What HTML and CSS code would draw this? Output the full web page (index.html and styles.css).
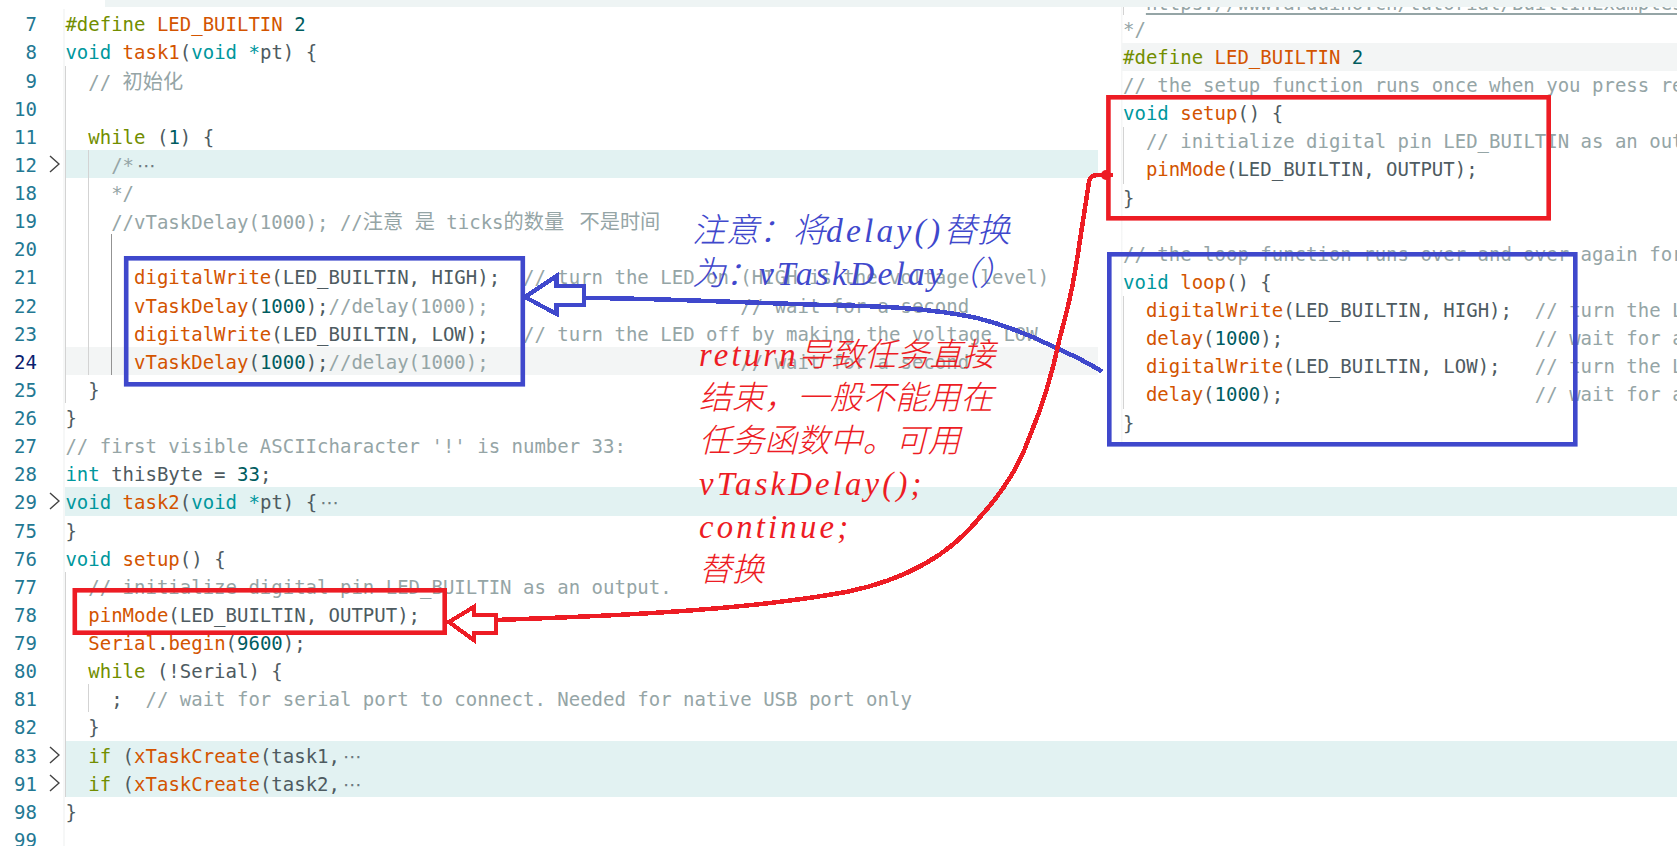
FILE: index.html
```html
<!DOCTYPE html>
<html lang="zh">
<head>
<meta charset="utf-8">
<title>FreeRTOS blink</title>
<link rel="stylesheet" href="styles.css">
</head>
<body>
<main class="page">
  <div class="strip"></div>
  <section class="editor">
    <div class="row"><span class="num">7</span><span class="fold"></span><div class="code"><b class="k">#define</b> <b class="f">LED_BUILTIN</b> <b class="n">2</b></div></div>
    <div class="row"><span class="num">8</span><span class="fold"></span><div class="code"><b class="t">void</b> <b class="f">task1</b>(<b class="t">void</b> <b class="t">*</b>pt) {</div></div>
    <div class="row"><span class="num">9</span><span class="fold"></span><div class="code"><i class="guide g1"></i>  <b class="c">// <span class="cjk">初始化</span></b></div></div>
    <div class="row"><span class="num">10</span><span class="fold"></span><div class="code"><i class="guide g1"></i></div></div>
    <div class="row"><span class="num">11</span><span class="fold"></span><div class="code"><i class="guide g1"></i>  <b class="k">while</b> (<b class="n">1</b>) {</div></div>
    <div class="row"><span class="num">12</span><span class="fold"><svg class="chev" viewBox="0 0 11 18"><path d="M1 1L10 9L1 17"/></svg></span><div class="code folded"><i class="guide g1"></i><i class="guide g2"></i>    <b class="c">/*</b><span class="more">⋯</span></div></div>
    <div class="row"><span class="num">18</span><span class="fold"></span><div class="code"><i class="guide g1"></i><i class="guide g2"></i>    <b class="c">*/</b></div></div>
    <div class="row"><span class="num">19</span><span class="fold"></span><div class="code"><i class="guide g1"></i><i class="guide g2"></i>    <b class="c">//vTaskDelay(1000); //<span class="cjk">注意</span> <span class="cjk">是</span> ticks<span class="cjk">的数量</span> <span class="cjk gap">不是时间</span></b></div></div>
    <div class="row"><span class="num">20</span><span class="fold"></span><div class="code"><i class="guide g1"></i><i class="guide g2"></i><i class="guide g3"></i></div></div>
    <div class="row"><span class="num">21</span><span class="fold"></span><div class="code"><i class="guide g1"></i><i class="guide g2"></i><i class="guide g3"></i>      <b class="f">digitalWrite</b>(LED_BUILTIN, HIGH);  <b class="c">// turn the LED on (HIGH is the voltage level)</b></div></div>
    <div class="row"><span class="num">22</span><span class="fold"></span><div class="code"><i class="guide g1"></i><i class="guide g2"></i><i class="guide g3"></i>      <b class="f">vTaskDelay</b>(<b class="n">1000</b>);<b class="c">//delay(1000);                      // wait for a second</b></div></div>
    <div class="row"><span class="num">23</span><span class="fold"></span><div class="code"><i class="guide g1"></i><i class="guide g2"></i><i class="guide g3"></i>      <b class="f">digitalWrite</b>(LED_BUILTIN, LOW);   <b class="c">// turn the LED off by making the voltage LOW</b></div></div>
    <div class="row active"><span class="num">24</span><span class="fold"></span><div class="code"><i class="guide g1"></i><i class="guide g2"></i><i class="guide g3"></i>      <b class="f">vTaskDelay</b>(<b class="n">1000</b>);<b class="c">//delay(1000);                      // wait for a second</b></div></div>
    <div class="row"><span class="num">25</span><span class="fold"></span><div class="code"><i class="guide g1"></i>  }</div></div>
    <div class="row"><span class="num">26</span><span class="fold"></span><div class="code">}</div></div>
    <div class="row"><span class="num">27</span><span class="fold"></span><div class="code"><b class="c">// first visible ASCIIcharacter '!' is number 33:</b></div></div>
    <div class="row"><span class="num">28</span><span class="fold"></span><div class="code"><b class="t">int</b> thisByte = <b class="n">33</b>;</div></div>
    <div class="row"><span class="num">29</span><span class="fold"><svg class="chev" viewBox="0 0 11 18"><path d="M1 1L10 9L1 17"/></svg></span><div class="code folded"><b class="t">void</b> <b class="f">task2</b>(<b class="t">void</b> <b class="t">*</b>pt) {<span class="more">⋯</span></div></div>
    <div class="row"><span class="num">75</span><span class="fold"></span><div class="code">}</div></div>
    <div class="row"><span class="num">76</span><span class="fold"></span><div class="code"><b class="t">void</b> <b class="f">setup</b>() {</div></div>
    <div class="row"><span class="num">77</span><span class="fold"></span><div class="code"><i class="guide g1"></i>  <b class="c">// initialize digital pin LED_BUILTIN as an output.</b></div></div>
    <div class="row"><span class="num">78</span><span class="fold"></span><div class="code"><i class="guide g1"></i>  <b class="f">pinMode</b>(LED_BUILTIN, OUTPUT);</div></div>
    <div class="row"><span class="num">79</span><span class="fold"></span><div class="code"><i class="guide g1"></i>  <b class="f">Serial</b>.<b class="f">begin</b>(<b class="n">9600</b>);</div></div>
    <div class="row"><span class="num">80</span><span class="fold"></span><div class="code"><i class="guide g1"></i>  <b class="k">while</b> (!Serial) {</div></div>
    <div class="row"><span class="num">81</span><span class="fold"></span><div class="code"><i class="guide g1"></i><i class="guide g2"></i>    ;  <b class="c">// wait for serial port to connect. Needed for native USB port only</b></div></div>
    <div class="row"><span class="num">82</span><span class="fold"></span><div class="code"><i class="guide g1"></i>  }</div></div>
    <div class="row"><span class="num">83</span><span class="fold"><svg class="chev" viewBox="0 0 11 18"><path d="M1 1L10 9L1 17"/></svg></span><div class="code folded"><i class="guide g1"></i>  <b class="k">if</b> (<b class="f">xTaskCreate</b>(task1,<span class="more">⋯</span></div></div>
    <div class="row"><span class="num">91</span><span class="fold"><svg class="chev" viewBox="0 0 11 18"><path d="M1 1L10 9L1 17"/></svg></span><div class="code folded"><i class="guide g1"></i>  <b class="k">if</b> (<b class="f">xTaskCreate</b>(task2,<span class="more">⋯</span></div></div>
    <div class="row"><span class="num">98</span><span class="fold"></span><div class="code">}</div></div>
    <div class="row"><span class="num">99</span><span class="fold"></span><div class="code"></div></div>
  </section>

  <section class="paste">
    <div class="pline"><i class="guide g1"></i>  <b class="c url">https://www.arduino.cn/tutorial/BuiltInExamples/Basics/Blink_LED_BUILTIN.html</b></div>
    <div class="pline"><b class="c">*/</b></div>
    <div class="pline current"><b class="k">#define</b> <b class="f">LED_BUILTIN</b> <b class="n">2</b></div>
    <div class="pline"><b class="c">// the setup function runs once when you press reset or power the board</b></div>
    <div class="pline"><b class="t">void</b> <b class="f">setup</b>() {</div>
    <div class="pline"><i class="guide g1"></i>  <b class="c">// initialize digital pin LED_BUILTIN as an output.</b></div>
    <div class="pline"><i class="guide g1"></i>  <b class="f">pinMode</b>(LED_BUILTIN, OUTPUT);</div>
    <div class="pline">}</div>
    <div class="pline"></div>
    <div class="pline"><b class="c">// the loop function runs over and over again forever</b></div>
    <div class="pline"><b class="t">void</b> <b class="f">loop</b>() {</div>
    <div class="pline"><i class="guide g1"></i>  <b class="f">digitalWrite</b>(LED_BUILTIN, HIGH);  <b class="c">// turn the LED on (HIGH is the voltage level)</b></div>
    <div class="pline"><i class="guide g1"></i>  <b class="f">delay</b>(<b class="n">1000</b>);                      <b class="c">// wait for a second</b></div>
    <div class="pline"><i class="guide g1"></i>  <b class="f">digitalWrite</b>(LED_BUILTIN, LOW);   <b class="c">// turn the LED off by making the voltage LOW</b></div>
    <div class="pline"><i class="guide g1"></i>  <b class="f">delay</b>(<b class="n">1000</b>);                      <b class="c">// wait for a second</b></div>
    <div class="pline">}</div>
  </section>

  <svg class="marks" viewBox="0 0 1677 846" aria-hidden="true">
    <rect class="blue box" x="126.2" y="258.3" width="396.6" height="126"/>
    <rect class="blue box" x="1109.3" y="254.3" width="466" height="190"/>
    <path class="blue" d="M1102 371.5C1085 361 1068 353 1054 347C1030 335 1005 325 977 318C930 308 880 306 824 305C770 303 720 301 679 300C645 299 615 298 584 298"/>
    <path class="blue head" d="M525 297L556.5 276L556.5 286L584 286L584 305L556.5 305L556.5 314Z"/>
    <rect class="red box" x="1108.4" y="97.3" width="440.3" height="121"/>
    <rect class="red box" x="74.8" y="590.3" width="369.9" height="42.4"/>
    <path class="red" d="M1113 175L1098 175Q1090 175 1089 182L1080 240C1073 290 1066 315 1060 337C1050 385 1038 417 1029 438C1018 470 1000 495 980 517C950 555 905 580 846 592C790 602 730 608 668 612C610 616 550 618 496 620"/>
    <circle class="dot" cx="1106" cy="175" r="5"/>
    <path class="red head" d="M449 622L473.7 607L473.7 615L496 615L496 632.7L473.7 632.7L473.7 640Z"/>
  </svg>

  <div class="note note-blue">
    <p>注意：将<span class="lat">delay()</span>替换</p>
    <p>为：<span class="lat">vTaskDelay</span>（）</p>
  </div>
  <div class="note note-red">
    <p><span class="lat">return</span>导致任务直接</p>
    <p>结束，一般不能用在</p>
    <p>任务函数中。可用</p>
    <p><span class="lat">vTaskDelay();</span></p>
    <p><span class="lat">continue;</span></p>
    <p>替换</p>
  </div>
</main>
</body>
</html>
```

FILE: styles.css
```css
* { box-sizing: border-box; }
html, body { margin: 0; padding: 0; background: #fff; }
body { width: 1677px; height: 846px; overflow: hidden; }

.page {
  position: relative;
  width: 1677px;
  height: 846px;
  overflow: hidden;
  font-family: "DejaVu Sans Mono", "Noto Sans CJK SC", monospace;
  font-size: 19px;
  color: #4e5b61;
}

.strip { height: 7px; margin-left: 105px; background: #eef4f4; }

.editor { padding-top: 2.3px; }

.row { display: flex; height: 28.14px; }
.num {
  width: 37px;
  flex: none;
  text-align: right;
  line-height: 30.6px;
  color: #237893;
}
.active .num { color: #0b216f; }
.active .code { background: #f3f5f5; }

.fold {
  width: 28.4px;
  flex: none;
  display: flex;
  align-items: center;
  padding-left: 11.5px;
  border-right: 2px solid #f6f7f7;
}
.chev { width: 11px; height: 18px; fill: none; stroke: #424242; stroke-width: 1.4; }

.code {
  position: relative;
  flex: 1;
  white-space: pre;
  line-height: 30.6px;
}
.folded { background: #e2f2f2; }

.guide { position: absolute; top: 0; bottom: 0; width: 1px; background: #d3d3d3; }
.g1 { left: 0; }
.g2 { left: 22.8px; }
.g3 { left: 45.8px; background: #939393; }

b { font-weight: normal; }
.k { color: #728e00; }
.f { color: #d35400; }
.t { color: #00979d; }
.n { color: #005c5f; }
.c { color: #95a5a6; }
.cjk { font-family: "Noto Sans CJK SC", sans-serif; font-size: 20.2px; }
.gap { padding-left: 4px; }
.more {
  color: #6c7a80;
  font-family: "DejaVu Sans", sans-serif;
  font-size: 19px;
  margin-left: 3px;
}

.paste {
  position: absolute;
  left: 1098px;
  top: 7px;
  width: 579px;
  height: 438px;
  padding-left: 24px;
  background: linear-gradient(#f5f6f6, #f5f6f6) 23px 0 / 1.5px 100% no-repeat #fff;
  overflow: hidden;
  isolation: isolate;
}
.pline {
  position: relative;
  top: -20.3px;
  height: 28.14px;
  padding-left: 1px;
  line-height: 29.6px;
  white-space: pre;
}
.pline .g1 { left: 1px; }
.current::before {
  content: "";
  position: absolute;
  inset: 0;
  background: #f3f5f5;
  z-index: -1;
}
.url {
  position: relative;
  top: 2px;
  text-decoration: underline;
  text-decoration-thickness: 2px;
  text-underline-offset: 3px;
  text-decoration-skip-ink: none;
}

.marks { position: absolute; left: 0; top: 0; width: 1677px; height: 846px; pointer-events: none; }
.marks path, .marks rect { fill: none; stroke-linejoin: miter; }
.marks path { shape-rendering: crispEdges; }
.blue { stroke: #3f48cc; stroke-width: 4.5; }
.red { stroke: #ed1c24; stroke-width: 4.5; }
.box { stroke-width: 4.6; }
.marks .head { stroke-width: 4.2; }
.dot { fill: #ed1c24; }

.note {
  position: absolute;
  font-style: italic;
  line-height: 43px;
}
.note p {
  height: 43px;
  margin: 0;
  font-family: "Noto Sans CJK SC", sans-serif;
  font-weight: 300;
  white-space: pre;
}
.lat { font-family: "Liberation Serif", serif; }
.note-blue { left: 692px; top: 206px; color: #3f48cc; font-size: 33.5px; }
.note-blue .lat { letter-spacing: 3.2px; }
.note-red { left: 699px; top: 330px; color: #ed1c24; font-size: 32.7px; }
.note-red .lat { letter-spacing: 3.2px; }
```
